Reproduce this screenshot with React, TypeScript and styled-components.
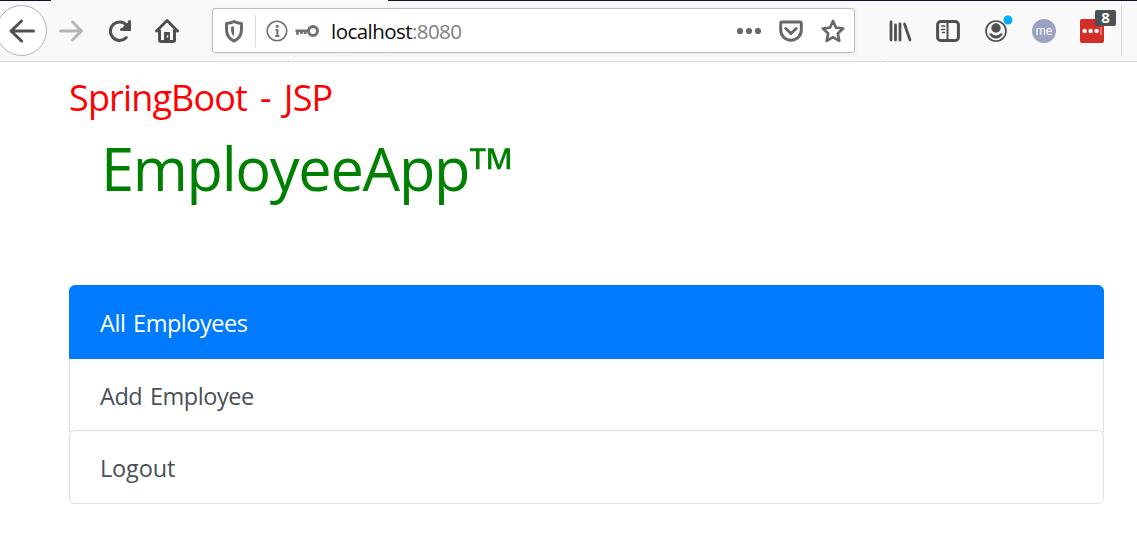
import React from 'react';
import styled, { createGlobalStyle } from 'styled-components';

const GlobalStyle = createGlobalStyle`
  * { box-sizing: border-box; }
  body {
    margin: 0;
    background: #fff;
    font-family: 'Open Sans', 'Noto Sans', sans-serif;
    overflow: hidden;
  }
`;

const TabEdge = styled.div`
  height: 1px;
  background: linear-gradient(90deg, #12102b 51px, #f9f9fa 51px 388px, #12102b 388px);
`;

const Toolbar = styled.header`
  display: flex;
  align-items: center;
  height: 61px;
  padding-bottom: 2px;
  background:
    repeating-linear-gradient(90deg, #dcdcdc 0 288px, #b4b4b4 288px 289px, #dcdcdc 289px 298px) 0 100% / 100% 1px no-repeat,
    #f9f9fa;
`;

const BackButton = styled.button`
  flex: none;
  display: flex;
  align-items: center;
  justify-content: center;
  width: 51px;
  height: 51px;
  margin: 0 11px 0 -4px;
  padding: 0;
  border: 1px solid #b1b1b1;
  border-radius: 50%;
  background: #fff;
`;

const IconGroup = styled.div`
  display: flex;
  gap: 22px;
`;

const Glyph = styled.svg<{ $color?: string }>`
  flex: none;
  display: block;
  width: 26px;
  height: 26px;
  overflow: visible;
  color: ${(p) => p.$color ?? '#505051'};
  fill: none;
  stroke: currentColor;
  stroke-width: 3;
  stroke-linecap: round;
  stroke-linejoin: round;
`;

const AddressBar = styled.div`
  display: flex;
  align-items: center;
  width: 643px;
  height: 45px;
  margin: 0 32px;
  padding: 0 8px;
  background: #fff;
  border: 1px solid #bdbdbd;
  border-radius: 3px;
  box-shadow: 0 1px 5px rgba(0, 0, 0, 0.06);
`;

const Divider = styled.span<{ $height: number }>`
  flex: none;
  width: 1px;
  height: ${(p) => p.$height}px;
  background: #dadada;
`;

const SiteInfo = styled.div`
  display: flex;
  gap: 4px;
  margin-left: 8px;
`;

const Address = styled.span`
  flex: 1;
  margin-left: 11px;
  font-size: 20.5px;
  line-height: 28px;
  letter-spacing: -0.55px;
  color: #0c0c0d;
`;

const Port = styled.span`
  color: #808080;
`;

const PageActions = styled.div`
  display: flex;
  gap: 16px;
`;

const ExtensionButton = styled.span`
  position: relative;
`;

const Badge = styled.span`
  position: absolute;
  top: -8px;
  left: 16px;
  width: 21px;
  height: 16px;
  border-radius: 2px;
  background: #4e5153;
  color: #fff;
  font-size: 15px;
  font-weight: 700;
  line-height: 15px;
  text-align: center;
`;

const ToolbarEnd = styled.div`
  display: flex;
  margin-left: 16px;
`;

const Page = styled.main`
  padding: 14px 33px 0 69px;
`;

const Title = styled.h2`
  margin: 0;
  color: #f00;
  font-size: 36px;
  font-weight: 400;
  line-height: 44px;
  letter-spacing: -0.85px;
  word-spacing: 4.5px;
`;

const Brand = styled.h1`
  margin: 4px 0 0 32px;
  color: #008000;
  font-size: 59.5px;
  font-weight: 400;
  line-height: 88px;
  letter-spacing: -1.3px;
  white-space: nowrap;
`;

const Menu = styled.nav`
  display: flex;
  flex-direction: column;
  margin-top: 73px;
`;

const MenuItem = styled.a<{ $active?: boolean; $last?: boolean }>`
  display: flex;
  align-items: center;
  height: ${(p) => (p.$last || p.$active ? 74 : 73)}px;
  margin-top: ${(p) => (p.$last ? -2 : 0)}px;
  padding: 1px 30px 0;
  border: 1px solid ${(p) => (p.$active ? '#007bff' : '#dfdfdf')};
  ${(p) => !p.$active && !p.$last && 'border-top: 0;'}
  border-radius: ${(p) => (p.$last ? '6px' : p.$active ? '6px 6px 0 0' : '0')};
  background: ${(p) => (p.$active ? '#007bff' : '#fff')};
  color: ${(p) => (p.$active ? '#fff' : '#495057')};
  font-size: 23.5px;
  letter-spacing: ${(p) => (p.$last ? -0.15 : -0.45)}px;
  word-spacing: 2px;
  text-decoration: none;
`;

export default function App() {
  return (
    <>
      <GlobalStyle />
      <TabEdge />
      <Toolbar>
        <BackButton aria-label="Back">
          <Glyph viewBox="0 0 26 26"><path d="M24.500 13H2M12.500 3L2 13l10.500 10" /></Glyph>
        </BackButton>
        <IconGroup>
          <Glyph viewBox="0 0 26 26" $color="#b5b5b5"><path d="M2.500 13H23M14.500 4L23.500 13l-9 9" /></Glyph>
          <Glyph viewBox="0 0 26 26">
            <path d="M20.600 7.200A9.200 9.200 0 1 0 20.300 19.500" />
            <path d="M23.500 3.500v8H15.500" strokeLinejoin="miter" />
            <path d="M18 10l4-4v4z" />
          </Glyph>
          <Glyph viewBox="0 0 26 26">
            <path d="M2.500 13L13 2.500 23.500 13M5.500 12.500v9.300q0 1.700 1.700 1.700h11.600q1.700 0 1.700-1.700v-9.300" />
            <path d="M10.500 23v-8.500h5V23z" fill="currentColor" strokeWidth="1" />
            <path d="M13.500 18v1" stroke="#f9f9fa" strokeWidth="1.500" />
          </Glyph>
        </IconGroup>
        <AddressBar>
          <Glyph viewBox="0 0 26 26" $color="#68686a">
            <path d="M13 3.500C10.300 5 8 5.400 5.500 5.600V11c0 6.300 2.700 10 7.500 12 4.800-2 7.500-5.700 7.500-12V5.600C18 5.400 15.700 5 13 3.500z" />
            <path d="M13 8.200v10.200c-2.100-1.700-3-4-3-7.700V9z" fill="currentColor" stroke="none" />
          </Glyph>
          <Divider $height={32} style={{ marginLeft: 8 }} />
          <SiteInfo>
            <Glyph viewBox="0 0 26 26" $color="#717173">
              <circle cx="13" cy="13" r="9.800" strokeWidth="1.600" />
              <path d="M11.500 12H13.400V18M11.200 18h4.200" strokeWidth="2" strokeLinecap="butt" />
              <circle cx="13.200" cy="8.200" r="1.500" fill="currentColor" stroke="none" />
            </Glyph>
            <Glyph viewBox="0 0 26 26" $color="#717173">
              <circle cx="19" cy="13" r="4.500" />
              <path d="M1.500 12.800H15M3.500 13v3.800M7.500 13v3M11.200 13v3" strokeLinecap="butt" strokeWidth="2.700" />
            </Glyph>
          </SiteInfo>
          <Address>localhost<Port>:8080</Port></Address>
          <PageActions>
            <Glyph viewBox="0 0 26 26" $color="#68686a">
              <g fill="currentColor" stroke="none"><circle cx="4" cy="13" r="3.100" /><circle cx="13" cy="13" r="3.100" /><circle cx="22" cy="13" r="3.100" /></g>
            </Glyph>
            <Glyph viewBox="0 0 26 26" $color="#68686a">
              <path d="M2.700 5.500q0-1.500 1.500-1.500h17.600q1.500 0 1.500 1.500V12a10.300 10.300 0 0 1-20.600 0z" />
              <path d="M7.800 10.500L13 15.500l5.200-5" />
            </Glyph>
            <Glyph viewBox="0 0 26 26" $color="#68686a">
              <path d="M13 3l3 6.700 7.200.8-5.400 4.900 1.500 7.400L13 19.200 6.700 22.800l1.500-7.400-5.400-4.900 7.200-.8z" strokeWidth="2.700" />
            </Glyph>
          </PageActions>
        </AddressBar>
        <IconGroup>
          <Glyph viewBox="0 0 26 26"><path d="M4 4v18M8.500 7v15M13 6v16M17.500 6l5.500 16" strokeWidth="2.800" /></Glyph>
          <Glyph viewBox="0 0 26 26">
            <rect x="2.600" y="3.600" width="20.800" height="18.800" rx="3" />
            <path d="M12.500 4v18" strokeWidth="2" />
            <path d="M6.500 8h3.200M6.500 11.500h3M7.500 14.500h2" strokeWidth="1.400" />
          </Glyph>
          <Glyph viewBox="0 0 26 26">
            <circle cx="13" cy="13" r="10" strokeWidth="1.700" />
            <circle cx="13" cy="10" r="4.700" fill="currentColor" stroke="none" />
            <path d="M6 15.500h2.600a6 6 0 0 0 8.800 0H20c-1.500 3.500-4 5-7 5s-5.500-1.500-7-5z" fill="currentColor" stroke="none" />
            <circle cx="25" cy="2" r="4.500" fill="#00adff" stroke="none" />
          </Glyph>
          <Glyph viewBox="0 0 26 26">
            <circle cx="13" cy="13" r="12" fill="#9ba2c2" stroke="none" />
            <text x="13" y="16.700" textAnchor="middle" fill="#fff" stroke="none" fontSize="14" fontFamily="Lato, sans-serif" textLength="17" lengthAdjust="spacingAndGlyphs">me</text>
          </Glyph>
          <ExtensionButton>
            <Glyph viewBox="0 0 26 26">
              <rect x="1" y="1" width="24" height="24" rx="2" fill="#d22d27" stroke="none" />
              <g fill="#fff" stroke="none"><circle cx="5.600" cy="13" r="2.200" /><circle cx="11.600" cy="13" r="2.200" /><circle cx="17.600" cy="13" r="2.200" /></g>
              <path d="M22 9v8" stroke="#f3b5b2" strokeWidth="1" strokeLinecap="butt" />
            </Glyph>
            <Badge>8</Badge>
          </ExtensionButton>
        </IconGroup>
        <ToolbarEnd><Divider $height={51} /></ToolbarEnd>
      </Toolbar>
      <Page>
        <Title>SpringBoot - JSP</Title>
        <Brand>EmployeeApp™</Brand>
        <Menu>
          <MenuItem $active>All Employees</MenuItem>
          <MenuItem>Add Employee</MenuItem>
          <MenuItem $last>Logout</MenuItem>
        </Menu>
      </Page>
    </>
  );
}
